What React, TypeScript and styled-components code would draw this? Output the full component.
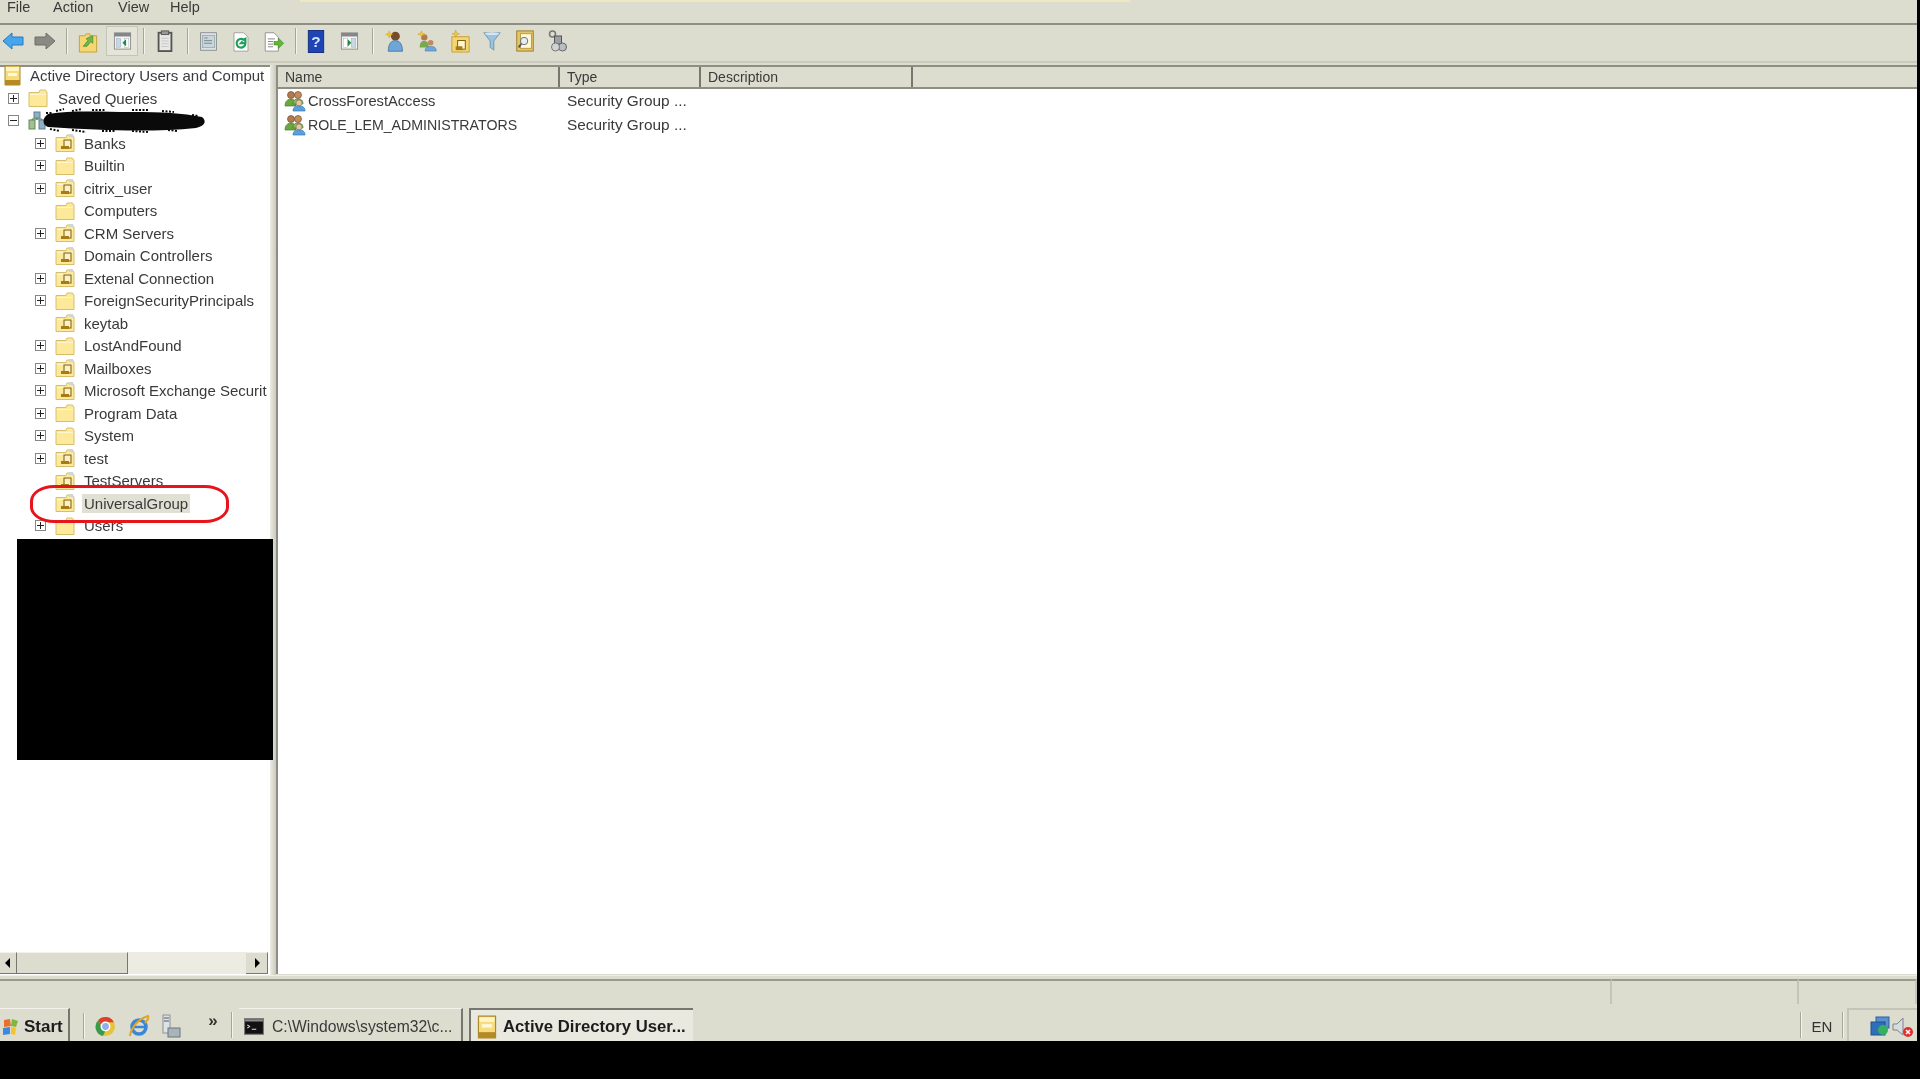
import React from "react";
import styled, { createGlobalStyle } from "styled-components";

const Global = createGlobalStyle`
  html, body { margin: 0; padding: 0; background: #000; overflow: hidden; }
  #root { width: 1920px; height: 1079px; }
`;

const Desktop = styled.div`
  position: relative;
  width: 1920px;
  height: 1079px;
  background: #000;
  overflow: hidden;
  font-family: "Liberation Sans", Arial, sans-serif;
  color: #3a3a3a;
`;
const Screen = styled.div`
  width: 1917px;
  height: 1041px;
  background: #dcdccf;
  display: flex;
  flex-direction: column;
  filter: blur(0.5px);
`;
const MenuBar = styled.div`
  height: 20px;
  flex: none;
  display: flex;
  position: relative;
  font-size: 14.5px;
  line-height: 14px;
  overflow: hidden;
`;
const TopGlow = styled.div`
  position: absolute;
  left: 300px;
  top: 0;
  width: 830px;
  height: 2px;
  background: #efe6c4;
`;
const MenuItem = styled.span<{ $w: number }>`
  width: ${(p) => p.$w}px;
  flex: none;
  padding-left: 7px;
  box-sizing: border-box;
`;
const Toolbar = styled.div`
  height: 32px;
  padding-bottom: 4px;
  flex: none;
  margin-top: 3px;
  border-top: 2px solid #8e8e84;
  border-bottom: 2px solid #c9c9bc;
  display: flex;
  align-items: center;
`;
const Tool = styled.div<{ $w: number; $active?: boolean }>`
  width: ${(p) => p.$w}px;
  height: 30px;
  flex: none;
  display: flex;
  align-items: center;
  justify-content: center;
  box-sizing: border-box;
  ${(p) => p.$active && "background: #e4e4d9; border: 1px solid #c4c4b8;"}
`;
const Sep = styled.div<{ $w: number }>`
  width: ${(p) => p.$w}px;
  height: 26px;
  flex: none;
  display: flex;
  justify-content: center;
  &::before { content: ""; width: 1px; flex: none; background: #a5a59a; border-right: 1px solid #f4f4ec; }
`;
const Main = styled.div`
  flex: 1;
  min-height: 0;
  display: flex;
  margin-top: 2px;
`;
const TreePane = styled.div`
  width: 270px;
  flex: none;
  background: #fff;
  display: flex;
  flex-direction: column;
  border-top: 2px solid #8e8e84;
`;
const TreeBody = styled.div`
  flex: 1;
  min-height: 0;
  margin-top: -3px;
  overflow: hidden;
`;
const Row = styled.div<{ $indent: number; $h?: number }>`
  height: ${(p) => p.$h ?? 22.5}px;
  display: flex;
  align-items: center;
  padding-left: ${(p) => p.$indent}px;
  font-size: 15px;
  white-space: nowrap;
`;
const Expander = styled.span<{ $hidden?: boolean }>`
  width: 11px;
  height: 11px;
  flex: none;
  box-sizing: border-box;
  border: 1px solid ${(p) => (p.$hidden ? "transparent" : "#858585")};
  background: ${(p) => (p.$hidden ? "transparent" : "#fff")};
  position: relative;
  margin-right: 9px;
  ${(p) =>
    !p.$hidden &&
    `&::before { content: ""; position: absolute; left: 1px; right: 1px; top: 4px; height: 1px; background: #222; }`}
`;
const Plus = styled(Expander)`
  &::after { content: ""; position: absolute; top: 1px; bottom: 1px; left: 4px; width: 1px; background: #222; }
`;
const Label = styled.span<{ $selected?: boolean; $ml?: number }>`
  margin-left: ${(p) => p.$ml ?? 7}px;
  padding: 1px 2px 1px 2px;
  line-height: 17px;
  ${(p) => p.$selected && "background: #e0e0d4;"}
`;
const ScrollBar = styled.div`
  height: 22px;
  flex: none;
  display: flex;
  background: #ecece2;
  box-sizing: border-box;
  margin-bottom: 1px;
  margin-right: 2px;
`;
const ScrollBtn = styled.div<{ $w: number }>`
  width: ${(p) => p.$w}px;
  flex: none;
  background: #dcdccf;
  border-top: 1px solid #f2f2ea;
  border-right: 1px solid #77776f;
  border-bottom: 1px solid #77776f;
  box-sizing: border-box;
  display: flex;
  align-items: center;
  justify-content: center;
`;
const Thumb = styled.div`
  width: 111px;
  flex: none;
  background: #dcdccf;
  border-top: 1px solid #f2f2ea;
  border-right: 1px solid #77776f;
  border-bottom: 1px solid #77776f;
  box-sizing: border-box;
`;
const Track = styled.div`
  flex: 1;
`;
const Splitter = styled.div`
  width: 6px;
  flex: none;
  background: linear-gradient(90deg, #ecece4, #c9c9bd);
`;
const ListPane = styled.div`
  flex: 1;
  min-width: 0;
  background: #fff;
  border-left: 2px solid #8e8e84;
  border-top: 2px solid #8e8e84;
  margin-bottom: 1px;
`;
const HeaderRow = styled.div`
  height: 20px;
  display: flex;
  background: #dcdccf;
  border-bottom: 2px solid #8e8e84;
  font-size: 14px;
  line-height: 21px;
`;
const HeaderCell = styled.div<{ $w: number }>`
  width: ${(p) => p.$w}px;
  flex: none;
  box-sizing: border-box;
  padding-left: 7px;
  border-right: 2px solid #77776f;
`;
const ListRow = styled.div`
  height: 24px;
  display: flex;
  align-items: center;
`;
const NameCell = styled.div<{ $size: number }>`
  width: 282px;
  flex: none;
  display: flex;
  align-items: center;
  gap: 2px;
  padding-left: 6px;
  box-sizing: border-box;
  font-size: ${(p) => p.$size}px;
`;
const TypeCell = styled.div`
  padding-left: 7px;
  font-size: 15.4px;
`;
const StatusBar = styled.div`
  height: 32px;
  flex: none;
  display: flex;
  border-top: 1px solid #eeeee6;
  box-sizing: border-box;
  padding: 3px 0 3px;
`;
const StatusCell = styled.div<{ $w?: number }>`
  ${(p) => (p.$w ? `width: ${p.$w}px; flex: none;` : "flex: 1;")}
  box-sizing: border-box;
  border-top: 2px solid #9a9a8f;
  border-right: 2px solid #c4c4b8;
`;
const Taskbar = styled.div`
  height: 33px;
  flex: none;
  margin-top: 1px;
  display: flex;
  align-items: stretch;
  font-size: 15.7px;
`;
const StartButton = styled.div`
  width: 70px;
  flex: none;
  display: flex;
  align-items: center;
  gap: 4px;
  padding: 3px 0 0 2px;
  font-weight: 700;
  font-size: 17px;
  color: #1c1c1c;
  border-right: 2px solid #77776f;
  border-top: 1px solid #f2f2ea;
  box-sizing: border-box;
`;
const QuickLaunch = styled.div`
  width: 161px;
  flex: none;
  display: flex;
  align-items: center;
  box-sizing: border-box;
  padding: 3px 0 0 13px;
`;
const QuickSlot = styled.div<{ $w: number }>`
  width: ${(p) => p.$w}px;
  flex: none;
  display: flex;
  align-items: center;
  justify-content: center;
`;
const Chevron = styled.span`
  font-size: 17px;
  font-weight: 700;
  margin: -10px 0 0 6px;
  color: #333;
`;
const Divider = styled.div`
  width: 2px;
  height: 26px;
  flex: none;
  align-self: center;
  background: #f4f4ec;
  border-left: 1px solid #a5a59a;
  box-sizing: border-box;
`;
const TaskButton = styled.div<{ $active?: boolean }>`
  width: 224px;
  flex: none;
  display: flex;
  align-items: center;
  box-sizing: border-box;
  white-space: nowrap;
  margin-left: 6px;
  padding-top: 3px;
  ${(p) =>
    p.$active
      ? `gap: 6px; padding-left: 6px; background: #e9e9e0; border-top: 2px solid #77776f; border-left: 2px solid #77776f; font-weight: 700; color: #1c1c1c; font-size: 16.700px;`
      : `gap: 8px; padding-left: 5px; border-top: 1px solid #f2f2ea; border-right: 2px solid #77776f;`}
`;
const Tray = styled.div`
  flex: 1;
  display: flex;
  justify-content: flex-end;
  align-items: stretch;
`;
const Lang = styled.div`
  width: 40px;
  flex: none;
  display: flex;
  align-items: center;
  justify-content: center;
  padding-top: 3px;
  box-sizing: border-box;
  font-size: 15px;
  color: #333;
`;
const TrayIcons = styled.div`
  width: 70px;
  flex: none;
  display: flex;
  align-items: center;
  justify-content: flex-end;
  gap: 1px;
  padding: 3px 3px 0 0;
  box-sizing: border-box;
  border-left: 2px solid #c4c4b8;
  border-top: 2px solid #c4c4b8;
  margin-left: 3px;
`;
const BlackOut = styled.div`
  position: absolute;
  left: 17px;
  top: 539px;
  width: 256px;
  height: 221px;
  background: #000;
`;
const RedRing = styled.div`
  position: absolute;
  left: 30px;
  top: 485px;
  width: 199px;
  height: 38px;
  box-sizing: border-box;
  border: 3px solid #e8141c;
  border-radius: 24px / 16px;
`;
const Scribble = styled.svg`
  position: absolute;
  left: 42px;
  top: 108px;
`;

const FolderIcon = ({ ou }: { ou?: boolean }) => (
  <svg width="21" height="20" viewBox="0 0 21 20" style={{ flex: "none" }}>
    <path d="M1 4.500h10l1-2.500h5.500l1.500 2.500V18.500H1z" fill="#fde99a" stroke="#d8bd6a" strokeWidth="1" />
    <path d="M2 6h16v1H2z" fill="#fff6cf" />
    {ou && (
      <>
        <rect x="9" y="7" width="7" height="8" fill="#fbf1c2" stroke="#7a5a10" strokeWidth="1" />
        <rect x="6" y="13" width="8" height="3" fill="#a87a14" />
        <rect x="14" y="1" width="4" height="3" fill="#cfd6d8" />
      </>
    )}
  </svg>
);
const RootIcon = ({ w = 17, h = 21 }: { w?: number; h?: number }) => (
  <svg width={w} height={h} viewBox="0 0 17 21" style={{ flex: "none" }}>
    <path d="M1 1h15v19H1z" fill="#f6dc7c" stroke="#a98a2a" />
    <rect x="2" y="2" width="13" height="4" fill="#fff4c0" />
    <rect x="4" y="8" width="9" height="3" fill="#fff8dc" />
    <rect x="1" y="15" width="15" height="5" fill="#b58a25" />
  </svg>
);
const DomainIcon = () => (
  <svg width="20" height="20" viewBox="0 0 20 20" style={{ flex: "none" }}>
    <rect x="6" y="1" width="6" height="6" fill="#8fb0c4" stroke="#5f7f90" />
    <rect x="1" y="9" width="6" height="9" fill="#9fc08f" stroke="#66875a" />
    <rect x="11" y="9" width="6" height="9" fill="#8fb0c4" stroke="#5f7f90" />
    <path d="M9 7v2M4 9V8h10v1" stroke="#4c7c4c" fill="none" />
  </svg>
);
const GroupIcon = () => (
  <svg width="22" height="22" viewBox="0 0 22 22" style={{ flex: "none" }}>
    <circle cx="7" cy="5" r="3.500" fill="#b27a4f" stroke="#7a5233" strokeWidth="0.700" />
    <circle cx="14" cy="5" r="3.500" fill="#c48a5c" stroke="#7a5233" strokeWidth="0.700" />
    <path d="M1 16c0-5 3-7 6-7s5 2 5 7z" fill="#69a83f" stroke="#4c7c2c" strokeWidth="0.700" />
    <path d="M9 14c0-4 2-5 5-5s5 1 5 5z" fill="#8bb860" stroke="#4c7c2c" strokeWidth="0.700" />
    <circle cx="15" cy="13" r="3" fill="#e8c4a0" stroke="#7f6a58" strokeWidth="0.600" />
    <path d="M9 21c0-4 2.500-5 6-5s6 1 6 5z" fill="#5aa0dc" stroke="#3a78b0" strokeWidth="0.700" />
  </svg>
);
const Svg = ({ w = 24, h = 24, vw, vh, children }: { w?: number; h?: number; vw?: number; vh?: number; children: React.ReactNode }) => (
  <svg width={w} height={h} viewBox={`0 0 ${vw ?? w} ${vh ?? h}`} style={{ flex: "none" }}>{children}</svg>
);
const Back = () => (
  <Svg w={24} h={20} vw={22} vh={20}>
    <path d="M1 10L10 2v4h11v8H10v4z" fill="#45a6ee" stroke="#2a78c0" />
  </Svg>
);
const Forward = () => (
  <Svg w={24} h={20} vw={22} vh={20}>
    <path d="M21 10l-9-8v4H1v8h11v4z" fill="#8a8a84" stroke="#6f6f69" />
  </Svg>
);
const UpFolder = () => (
  <Svg w={22} h={23} vw={20} vh={24}>
    <path d="M1 6h6l1-2h4v2h7v17H1z" fill="#f5d672" stroke="#c4a13c" />
    <path d="M5 17l5-6-2-2 7-3v8l-2-2-4 5z" fill="#6cb84a" stroke="#3f8a2a" strokeWidth="0.700" />
  </Svg>
);
const TreeToggle = ({ right }: { right?: boolean }) => (
  <Svg w={23} h={18} vw={20} vh={20}>
    <rect x="1" y="1" width="18" height="18" fill="#f4f4f0" stroke="#8a8a84" />
    <rect x="1" y="1" width="18" height="4" fill="#85858a" />
    <rect x="3" y="7" width="5" height="10" fill={right ? "#fff" : "#c7d7e6"} stroke="#9ab" strokeWidth="0.500" />
    <rect x="12" y="7" width="5" height="10" fill={right ? "#c7d7e6" : "#fff"} stroke="#9ab" strokeWidth="0.500" />
    <path d={right ? "M8 8l4 4-4 4z" : "M14 8l-4 4 4 4z"} fill="#1d8a44" />
  </Svg>
);
const Clipboard = () => (
  <Svg w={18} h={22} vw={18} vh={24}>
    <rect x="2" y="3" width="14" height="20" fill="#e8e8e4" stroke="#555" strokeWidth="2" />
    <rect x="5" y="1" width="8" height="4" fill="#999" stroke="#555" />
    <path d="M5 9h8M5 12h8M5 15h8M5 18h8" stroke="#c4c4c4" />
  </Svg>
);
const Props = () => (
  <Svg w={21} h={21} vw={20} vh={24}>
    <rect x="1" y="2" width="18" height="20" fill="#dfe6ea" stroke="#80858a" />
    <rect x="3" y="5" width="14" height="14" fill="#c9d4db" stroke="#9aa" />
    <path d="M5 8h4M5 11h9M5 14h9" stroke="#6f7f88" />
  </Svg>
);
const Refresh = () => (
  <Svg w={18} h={21} vw={18} vh={24}>
    <path d="M1 2h11l5 5v16H1z" fill="#fff" stroke="#9a9a94" />
    <path d="M14 14a5 5 0 1 1-2-4l2-1v5h-5l2-2" fill="none" stroke="#1ea05a" strokeWidth="2.500" />
  </Svg>
);
const ExportIcon = () => (
  <Svg w={22} h={21} vw={22} vh={24}>
    <path d="M1 2h10l5 5v16H1z" fill="#fff" stroke="#8a8a84" />
    <path d="M4 9h8M4 12h6M4 15h6M4 18h6" stroke="#777" />
    <path d="M11 12h5V8l6 6-6 6v-4h-5z" fill="#63b832" stroke="#3f8a2a" strokeWidth="0.700" />
  </Svg>
);
const Help = () => (
  <svg width="18" height="23" viewBox="0 0 17 24" style={{ flex: "none" }}>
    <rect x="0.500" y="0.500" width="16" height="23" fill="#1f45b4" stroke="#123080" />
    <text x="8.500" y="18" fontSize="16" fontWeight="700" fontFamily="Liberation Sans" fill="#d8e4ff" textAnchor="middle">?</text>
  </svg>
);
const NewUser = () => (
  <Svg w={23} h={23} vw={22} vh={26}>
    <circle cx="12" cy="7" r="5" fill="#7a4a2c" />
    <path d="M4 24c0-9 4-12 8-12s8 3 8 12z" fill="#6fa6d8" stroke="#4478a8" />
    <path d="M5 1l1 3 3 1-3 1-1 3-1-3-3-1 3-1z" fill="#f6c832" stroke="#cc9a10" strokeWidth="0.500" />
  </Svg>
);
const NewGroup = () => (
  <Svg w={22} h={22} vw={22} vh={24}>
    <circle cx="8" cy="8" r="3.500" fill="#b27a4f" />
    <circle cx="15" cy="14" r="3" fill="#c48a5c" />
    <path d="M3 19c0-5 2-7 5-7s5 2 5 7z" fill="#7aa84f" />
    <path d="M9 23c0-4 2-5 6-5s6 1 6 5z" fill="#6fa6d8" stroke="#4478a8" strokeWidth="0.600" />
    <path d="M5 1l1 2.500 3 1-3 1-1 2.500-1-2.500-3-1 3-1z" fill="#f6c832" stroke="#cc9a10" strokeWidth="0.500" />
  </Svg>
);
const NewOU = () => (
  <Svg w={21} h={23} vw={20} vh={24}>
    <path d="M1 7h18v16H1z" fill="#f3d574" stroke="#c4a13c" />
    <rect x="7" y="11" width="8" height="9" fill="#fff6cf" stroke="#7a5a10" />
    <rect x="5" y="17" width="7" height="4" fill="#a87a14" />
    <path d="M5 0l1 3 3 1-3 1-1 3-1-3-3-1 3-1z" fill="#f6c832" stroke="#cc9a10" strokeWidth="0.500" />
  </Svg>
);
const Filter = () => (
  <Svg w={24} h={20} vw={20} vh={22}>
    <path d="M1 2h18l-7 9v10l-4-3v-7z" fill="#9cc3de" stroke="#6f93ad" />
    <ellipse cx="10" cy="3" rx="8" ry="1.500" fill="#d6e6f0" />
  </Svg>
);
const Find = () => (
  <Svg w={20} h={22} vw={20} vh={24}>
    <rect x="1" y="1" width="18" height="22" fill="#e6c566" stroke="#9a7a22" />
    <rect x="5" y="4" width="12" height="16" fill="#fff8d8" stroke="#b8973e" />
    <circle cx="9" cy="12" r="4" fill="#e6eef4" stroke="#666" />
    <path d="M6 15l-3 4" stroke="#555" strokeWidth="2" />
  </Svg>
);
const Connect = () => (
  <Svg w={21} h={22} vw={20} vh={22}>
    <circle cx="5" cy="4" r="3" fill="none" stroke="#777" strokeWidth="1.500" />
    <rect x="7" y="6" width="7" height="8" fill="#9aa0a4" stroke="#555" />
    <circle cx="15" cy="17" r="4" fill="#b9bec2" stroke="#666" />
    <circle cx="8" cy="17" r="4" fill="#d0d4d8" stroke="#777" />
  </Svg>
);
const StartLogo = () => (
  <svg width="18" height="22" viewBox="0 0 18 20" style={{ flex: "none" }}>
    <path d="M2 3l6-1 1 7-7 1z" fill="#e8702c" />
    <path d="M10 2l6 2-2 6-5-1z" fill="#7cb83a" />
    <path d="M1 11l7-1 0 7-7 1z" fill="#3a8ae0" />
    <path d="M9 10l5 1-1 7-4-1z" fill="#f4c430" />
  </svg>
);
const Chrome = () => (
  <Svg w={21} h={23} vw={20} vh={20}>
    <circle cx="10" cy="10" r="9" fill="#e8c23a" />
    <path d="M10 1a9 9 0 0 1 8 5H10a4 4 0 0 0-4 3L3 4a9 9 0 0 1 7-3z" fill="#d9402f" />
    <path d="M3 4l4 8 3 2-2.500 5A9 9 0 0 1 3 4z" fill="#3a9a4c" />
    <circle cx="10" cy="10" r="4" fill="#8fb0e8" stroke="#fff" strokeWidth="1.500" />
  </Svg>
);
const IE = () => (
  <Svg w={22} h={24}>
    <circle cx="11" cy="13" r="7" fill="none" stroke="#3a86d8" strokeWidth="3.500" />
    <path d="M5 13h13" stroke="#3a86d8" strokeWidth="2.500" />
    <path d="M2 22C3 14 10 5 20 2c1 2-1 5-3 7" fill="none" stroke="#e0a620" strokeWidth="2" />
  </Svg>
);
const ServerMgr = () => (
  <Svg w={22} h={24} vw={20} vh={24}>
    <rect x="2" y="1" width="7" height="18" fill="#dde2e6" stroke="#8a9298" />
    <path d="M3 4h5M3 7h5" stroke="#556" />
    <rect x="7" y="14" width="12" height="9" fill="#a8b4bc" stroke="#6a767e" />
  </Svg>
);
const Cmd = () => (
  <Svg w={20} h={17} vw={18} vh={15}>
    <rect x="0.500" y="0.500" width="17" height="14" fill="#111" stroke="#777" />
    <rect x="1" y="1" width="16" height="2" fill="#8c8c8c" />
    <path d="M3 6l2 1.500-2 1.500M7 10h4" stroke="#ddd" fill="none" />
  </Svg>
);
const Network = () => (
  <Svg w={22} h={22} vw={20} vh={22}>
    <rect x="6" y="1" width="13" height="11" fill="#5a90d0" stroke="#2e5f9c" />
    <rect x="1" y="6" width="14" height="13" fill="#2e6fb8" stroke="#1f4f8c" />
    <circle cx="13" cy="14" r="5" fill="#35b060" />
  </Svg>
);
const Speaker = () => (
  <Svg w={22} h={24} vw={22} vh={22}>
    <path d="M1 8h4l6-6v17l-6-5H1z" fill="#d8dcde" stroke="#7d8285" />
    <circle cx="16" cy="16" r="5" fill="#df3030" />
    <path d="M14 14l4 4M18 14l-4 4" stroke="#fff" strokeWidth="1.500" />
  </Svg>
);
const ArrowL = () => <svg width="6" height="10" viewBox="0 0 6 10"><path d="M5 0v10L0 5z" fill="#000" /></svg>;
const ArrowR = () => <svg width="6" height="10" viewBox="0 0 6 10"><path d="M1 0v10l5-5z" fill="#000" /></svg>;

type Node = { name: string; exp: boolean; ou: boolean; selected?: boolean };
const nodes: Node[] = [
  { name: "Banks", exp: true, ou: true },
  { name: "Builtin", exp: true, ou: false },
  { name: "citrix_user", exp: true, ou: true },
  { name: "Computers", exp: false, ou: false },
  { name: "CRM Servers", exp: true, ou: true },
  { name: "Domain Controllers", exp: false, ou: true },
  { name: "Extenal Connection", exp: true, ou: true },
  { name: "ForeignSecurityPrincipals", exp: true, ou: false },
  { name: "keytab", exp: false, ou: true },
  { name: "LostAndFound", exp: true, ou: false },
  { name: "Mailboxes", exp: true, ou: true },
  { name: "Microsoft Exchange Securit", exp: true, ou: true },
  { name: "Program Data", exp: true, ou: false },
  { name: "System", exp: true, ou: false },
  { name: "test", exp: true, ou: true },
  { name: "TestServers", exp: false, ou: true },
  { name: "UniversalGroup", exp: false, ou: true, selected: true },
  { name: "Users", exp: true, ou: false },
];

export default function App() {
  return (
    <Desktop>
      <Global />
      <Screen>
        <MenuBar>
          <TopGlow />
          <MenuItem $w={46}>File</MenuItem>
          <MenuItem $w={65}>Action</MenuItem>
          <MenuItem $w={52}>View</MenuItem>
          <MenuItem $w={50}>Help</MenuItem>
        </MenuBar>
        <Toolbar>
          <Tool $w={26}><Back /></Tool>
          <Tool $w={38}><Forward /></Tool>
          <Sep $w={6} />
          <Tool $w={36}><UpFolder /></Tool>
          <Tool $w={32} $active><TreeToggle /></Tool>
          <Sep $w={12} />
          <Tool $w={30}><Clipboard /></Tool>
          <Sep $w={16} />
          <Tool $w={24}><Props /></Tool>
          <Tool $w={42}><Refresh /></Tool>
          <Tool $w={24}><ExportIcon /></Tool>
          <Sep $w={20} />
          <Tool $w={20}><Help /></Tool>
          <Tool $w={46}><TreeToggle right /></Tool>
          <Sep $w={2} />
          <Tool $w={40}><NewUser /></Tool>
          <Tool $w={26}><NewGroup /></Tool>
          <Tool $w={40}><NewOU /></Tool>
          <Tool $w={24}><Filter /></Tool>
          <Tool $w={42}><Find /></Tool>
          <Tool $w={22}><Connect /></Tool>
        </Toolbar>
        <Main>
          <TreePane>
            <TreeBody>
              <Row $indent={4} $h={23}>
                <RootIcon />
                <Label>Active Directory Users and Comput</Label>
              </Row>
              <Row $indent={8}>
                <Plus />
                <FolderIcon />
                <Label>Saved Queries</Label>
              </Row>
              <Row $indent={8}>
                <Expander />
                <DomainIcon />
              </Row>
              {nodes.map((n) => (
                <Row key={n.name} $indent={35}>
                  {n.exp ? <Plus /> : <Expander $hidden />}
                  <FolderIcon ou={n.ou} />
                  <Label $ml={6} $selected={n.selected}>{n.name}</Label>
                </Row>
              ))}
            </TreeBody>
            <ScrollBar>
              <ScrollBtn $w={17}><ArrowL /></ScrollBtn>
              <Thumb />
              <Track />
              <ScrollBtn $w={22}><ArrowR /></ScrollBtn>
            </ScrollBar>
          </TreePane>
          <Splitter />
          <ListPane>
            <HeaderRow>
              <HeaderCell $w={282}>Name</HeaderCell>
              <HeaderCell $w={141}>Type</HeaderCell>
              <HeaderCell $w={212}>Description</HeaderCell>
            </HeaderRow>
            <ListRow>
              <NameCell $size={14.7}><GroupIcon />CrossForestAccess</NameCell>
              <TypeCell>Security Group ...</TypeCell>
            </ListRow>
            <ListRow>
              <NameCell $size={14.2}><GroupIcon />ROLE_LEM_ADMINISTRATORS</NameCell>
              <TypeCell>Security Group ...</TypeCell>
            </ListRow>
          </ListPane>
        </Main>
        <StatusBar>
          <StatusCell />
          <StatusCell $w={187} />
          <StatusCell $w={118} />
        </StatusBar>
        <Taskbar>
          <StartButton><StartLogo />Start</StartButton>
          <QuickLaunch>
            <Divider />
            <QuickSlot $w={40}><Chrome /></QuickSlot>
            <QuickSlot $w={28}><IE /></QuickSlot>
            <QuickSlot $w={36}><ServerMgr /></QuickSlot>
            <QuickSlot $w={42}><Chevron>»</Chevron></QuickSlot>
          </QuickLaunch>
          <Divider />
          <TaskButton><Cmd />C:\Windows\system32\c...</TaskButton>
          <TaskButton $active><RootIcon w={20} h={24} />Active Directory User...</TaskButton>
          <Tray>
            <Divider />
            <Lang>EN</Lang>
            <Divider />
            <TrayIcons><Network /><Speaker /></TrayIcons>
          </Tray>
        </Taskbar>
      </Screen>
      <Scribble width="166" height="26" viewBox="0 0 166 26">
        <path d="M6 6C30 2 60 4 90 4s50 1 70 5c5 4 3 9-6 11-40 4-90 3-148-1C0 17 0 10 6 6z" fill="#0a0a0a" />
        <path d="M4 5h6M14 3l8-2M30 3l10-2M50 2h14M90 2h16M120 3l12 1M150 7l6 1M8 21l10 2M30 22l14 2M60 23h14M90 23l16 1M126 22l10 1" stroke="#0a0a0a" strokeWidth="2" strokeDasharray="2 1.500" />
      </Scribble>
      <RedRing />
      <BlackOut />
    </Desktop>
  );
}
